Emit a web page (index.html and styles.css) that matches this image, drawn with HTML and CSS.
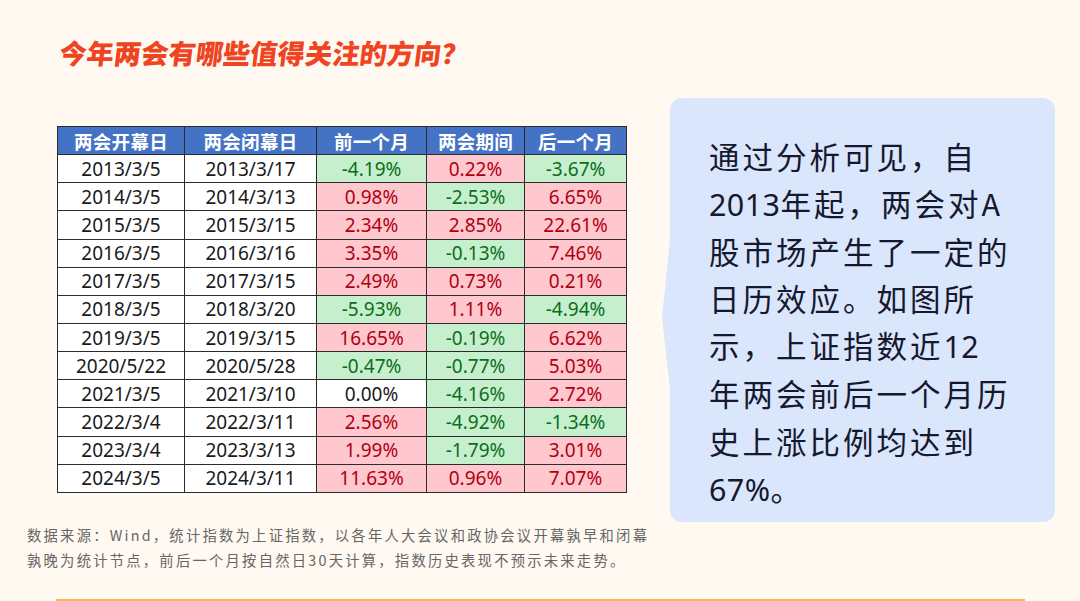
FILE: index.html
```html
<!DOCTYPE html>
<html lang="zh-CN">
<head>
<meta charset="utf-8">
<title>今年两会有哪些值得关注的方向？</title>
<link rel="stylesheet" href="styles.css">
</head>
<body>
<div class="page">
  <h1 class="title">今年两会有哪些值得关注的方向？</h1>
  <div class="content">
    <table class="data">
      <colgroup>
        <col class="c1"><col class="c2"><col class="c3"><col class="c4"><col class="c5">
      </colgroup>
      <thead>
        <tr><th>两会开幕日</th><th>两会闭幕日</th><th>前一个月</th><th>两会期间</th><th>后一个月</th></tr>
      </thead>
      <tbody>
        <tr><td>2013/3/5</td><td>2013/3/17</td><td class="dn">-4.19%</td><td class="up">0.22%</td><td class="dn">-3.67%</td></tr>
        <tr><td>2014/3/5</td><td>2014/3/13</td><td class="up">0.98%</td><td class="dn">-2.53%</td><td class="up">6.65%</td></tr>
        <tr><td>2015/3/5</td><td>2015/3/15</td><td class="up">2.34%</td><td class="up">2.85%</td><td class="up">22.61%</td></tr>
        <tr><td>2016/3/5</td><td>2016/3/16</td><td class="up">3.35%</td><td class="dn">-0.13%</td><td class="up">7.46%</td></tr>
        <tr><td>2017/3/5</td><td>2017/3/15</td><td class="up">2.49%</td><td class="up">0.73%</td><td class="up">0.21%</td></tr>
        <tr><td>2018/3/5</td><td>2018/3/20</td><td class="dn">-5.93%</td><td class="up">1.11%</td><td class="dn">-4.94%</td></tr>
        <tr><td>2019/3/5</td><td>2019/3/15</td><td class="up">16.65%</td><td class="dn">-0.19%</td><td class="up">6.62%</td></tr>
        <tr><td>2020/5/22</td><td>2020/5/28</td><td class="dn">-0.47%</td><td class="dn">-0.77%</td><td class="up">5.03%</td></tr>
        <tr><td>2021/3/5</td><td>2021/3/10</td><td>0.00%</td><td class="dn">-4.16%</td><td class="up">2.72%</td></tr>
        <tr><td>2022/3/4</td><td>2022/3/11</td><td class="up">2.56%</td><td class="dn">-4.92%</td><td class="dn">-1.34%</td></tr>
        <tr><td>2023/3/4</td><td>2023/3/13</td><td class="up">1.99%</td><td class="dn">-1.79%</td><td class="up">3.01%</td></tr>
        <tr><td>2024/3/5</td><td>2024/3/11</td><td class="up">11.63%</td><td class="up">0.96%</td><td class="up">7.07%</td></tr>
      </tbody>
    </table>
    <div class="callout">
      <p class="callout-text">通过分析可见，自<br><span class="num">2013</span>年起，两会对A<br>股市场产生了一定的<br>日历效应。如图所<br>示，上证指数近<span class="num">12</span><br>年两会前后一个月历<br>史上涨比例均达到<br><span class="num">67%</span>。</p>
    </div>
  </div>
  <p class="note">数据来源：Wind，统计指数为上证指数，以各年人大会议和政协会议开幕孰早和闭幕<br>孰晚为统计节点，前后一个月按自然日30天计算，指数历史表现不预示未来走势。</p>
  <div class="rule"></div>
</div>
</body>
</html>
```

FILE: styles.css
```css
* { box-sizing: border-box; }
html, body {
  margin: 0;
  padding: 0;
  background: #FFF9F2;
}
body {
  width: 1080px;
  height: 601px;
  overflow: hidden;
  font-family: "Noto Sans", "Noto Sans CJK SC", sans-serif;
}
.page {
  display: flex;
  flex-direction: column;
  height: 601px;
}
.title {
  margin: 30px 0 0 57px;
  height: 44px;
  line-height: 44px;
  font-family: "Noto Sans CJK SC", sans-serif;
  font-size: 27.3px;
  font-weight: 900;
  color: #EF4421;
  letter-spacing: 0;
  transform: skewX(-7deg);
  transform-origin: left bottom;
}
.content {
  display: flex;
  align-items: flex-start;
  margin-top: 24px;
  padding-left: 57px;
}
.data {
  border-collapse: collapse;
  table-layout: fixed;
  width: 569px;
  margin-top: 28px;
  font-size: 19px;
  color: #1a1a1a;
}
.data col.c1 { width: 127px; }
.data col.c2 { width: 132px; }
.data col.c3 { width: 110px; }
.data col.c4 { width: 98px; }
.data col.c5 { width: 102px; }
.data th, .data td {
  border: 1px solid #2b2b2b;
  height: 28.15px;
  padding: 0;
  text-align: center;
  line-height: 26px;
  white-space: nowrap;
  background: #ffffff;
}
.data th {
  background: #4472C4;
  color: #ffffff;
  font-family: "Noto Sans CJK SC", sans-serif;
  font-weight: 700;
  font-size: 18.5px;
  letter-spacing: 0.3px;
}
.data td.up { background: #FFC7CE; color: #B00010; }
.data td.dn { background: #C6EFCE; color: #0A6E1A; }
.callout {
  position: relative;
  margin-left: 43px;
  width: 385px;
  height: 424px;
  background: #DAE6FC;
  border-radius: 12px;
  padding: 35px 0 0 39px;
}
.callout::before {
  content: "";
  position: absolute;
  left: -8px;
  top: 132px;
  width: 9px;
  height: 168px;
  background: #DAE6FC;
  clip-path: polygon(100% 0, 0 52%, 100% 100%);
}
.callout-text {
  margin: 0;
  font-family: "Noto Sans CJK SC", sans-serif;
  font-size: 30.5px;
  line-height: 47.1px;
  letter-spacing: 3px;
  color: #16182E;
}
.callout-text .num {
  font-family: "Noto Sans", sans-serif;
  letter-spacing: 0.4px;
}
.note {
  margin: 0 0 0 27px;
  font-family: "Noto Sans CJK SC", sans-serif;
  font-size: 14.3px;
  line-height: 25px;
  letter-spacing: 2.25px;
  color: #666666;
}
.rule {
  margin: 27px 0 0 56px;
  width: 969px;
  height: 2px;
  background: #FFB74D;
}
```
